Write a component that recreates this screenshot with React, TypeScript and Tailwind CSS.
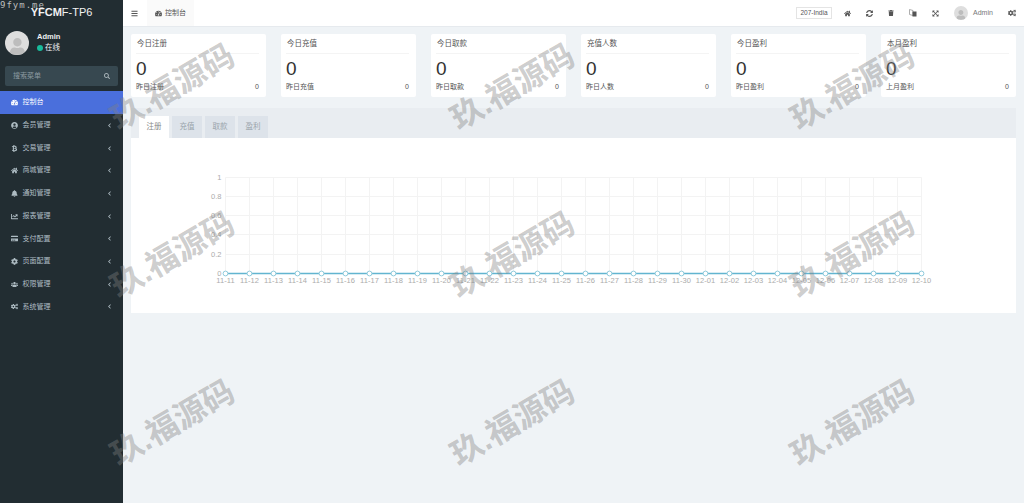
import React from "react";
import {
  FaTachometerAlt, FaUserCircle, FaBtc, FaHome, FaBell, FaChartLine, FaCreditCard, FaCog, FaUsers, FaCogs,
  FaBars, FaSyncAlt, FaTrash, FaExpandArrowsAlt, FaSearch, FaChevronLeft, FaUser,
} from "react-icons/fa";

const cjk = { fontFamily: '"Liberation Sans","Noto Sans CJK SC",sans-serif' };

const menu: [React.ComponentType<{ className?: string }>, string][] = [
  [FaUserCircle, "会员管理"],
  [FaBtc, "交易管理"],
  [FaHome, "商城管理"],
  [FaBell, "通知管理"],
  [FaChartLine, "报表管理"],
  [FaCreditCard, "支付配置"],
  [FaCog, "页面配置"],
  [FaUsers, "权限管理"],
  [FaCogs, "系统管理"],
];

const cards = [
  ["今日注册", "昨日注册"],
  ["今日充值", "昨日充值"],
  ["今日取款", "昨日取款"],
  ["充值人数", "昨日人数"],
  ["今日盈利", "昨日盈利"],
  ["本月盈利", "上月盈利"],
];

const dates = [
  ...Array.from({ length: 20 }, (_, i) => `11-${11 + i}`),
  ...Array.from({ length: 10 }, (_, i) => `12-${String(i + 1).padStart(2, "0")}`),
];

function Avatar({ size }: { size: string }) {
  return (
    <div className={`${size} rounded-full bg-[#dedede] overflow-hidden flex items-end justify-center shrink-0`}>
      <FaUser className="w-[70%] h-[70%] text-[#bdbdbd]" />
    </div>
  );
}

function TranslateIcon() {
  return (
    <svg width="8" height="8" viewBox="0 0 8 8" className="shrink-0">
      <path d="M0.5 0.5 L4 1.5 V6.5 L0.5 5.5 Z" fill="none" stroke="#999" strokeWidth="0.8" />
      <rect x="3.5" y="2.5" width="4" height="5" fill="#555" />
    </svg>
  );
}

function Chart() {
  const x0 = 94.5;
  const ys = [0, 19, 38, 57, 77, 96];
  const labels = ["1", "0.8", "0.6", "0.4", "0.2", "0"];
  return (
    <svg width="885" height="175" className="block" style={{ fontFamily: '"Liberation Sans",sans-serif' }}>
      <g transform="translate(0,39.5)">
        {ys.map((y) => (
          <line key={y} x1={x0} x2={x0 + 696} y1={y} y2={y} stroke="#f3f3f3" strokeWidth="1" />
        ))}
        {dates.map((d, i) => (
          <line key={d} x1={x0 + i * 24} x2={x0 + i * 24} y1={0} y2={96} stroke="#f3f3f3" strokeWidth="1" />
        ))}
        {ys.map((y, i) => (
          <text key={y} x={x0 - 4} y={y + 2.5} textAnchor="end" fontSize="7.5" fill="#ababab">{labels[i]}</text>
        ))}
        <line x1={x0} x2={x0 + 696} y1={96} y2={96} stroke="#62b5d0" strokeWidth="1.5" />
        {dates.map((d, i) => (
          <circle key={d} cx={x0 + i * 24} cy={96} r="2.4" fill="#fff" stroke="#8fcbdc" strokeWidth="1" />
        ))}
        {dates.map((d, i) => (
          <text key={d} x={x0 + i * 24} y={105.5} textAnchor="middle" fontSize="7.5" letterSpacing="0.1" fill="#ababab">{d}</text>
        ))}
      </g>
    </svg>
  );
}

export default function App() {
  return (
    <div className="relative flex h-[503px] w-[1024px] overflow-hidden bg-[#eff3f6] text-[#444]" style={cjk}>
      <aside className="flex w-[123px] shrink-0 flex-col bg-[#222d32]">
        <div className="flex h-[25px] items-center justify-center text-[11px] text-[#f2f2f2]">
          <b>YFCM</b>F-TP6
        </div>
        <div className="flex h-[41px] items-start gap-2 px-[5px] pt-[6px]">
          <Avatar size="h-[24px] w-[24px]" />
          <div className="mt-[1px] flex flex-col gap-[1px]">
            <span className="text-[7.5px] leading-[10px] font-bold text-[#eef1f2]">Admin</span>
            <span className="flex items-center gap-[2px] text-[7.5px] leading-[10px] text-[#eef1f2]">
              <i className="h-[6px] w-[6px] rounded-full bg-[#18bc9c]" />在线
            </span>
          </div>
        </div>
        <div className="mx-[5px] flex h-[20px] items-center justify-between rounded-[2px] bg-[#374850] pr-[8px] pl-[8px] text-[7px] text-[#8c9aa1]">
          搜索菜单
          <FaSearch className="h-[6px] w-[6px] text-[#a8b3b8]" />
        </div>
        <nav className="mt-[5px] flex flex-col">
          <div className="flex h-[23px] items-center gap-[4.5px] bg-[#4a6fdc] pl-[11px] text-[7px] text-white">
            <FaTachometerAlt className="h-[7px] w-[7px]" />控制台
          </div>
          {menu.map(([Icon, label]) => (
            <div key={label} className="flex h-[22.7px] items-center justify-between pr-[11px] pl-[11px] text-[7px] text-[#aebcc3]">
              <span className="flex items-center gap-[4.5px]">
                <Icon className="h-[7px] w-[7px]" />{label}
              </span>
              <FaChevronLeft className="h-[5px] w-[5px]" />
            </div>
          ))}
        </nav>
      </aside>

      <main className="flex min-w-0 flex-1 flex-col">
        <header className="flex h-[27px] items-center border-b border-[#e6eaee] bg-white pr-[8px] text-[#555]">
          <FaBars className="ml-[8px] h-[7px] w-[7px]" />
          <div className="ml-[9px] flex h-full w-[47px] items-center justify-center gap-[3px] bg-[#fafafa] text-[7px]">
            <FaTachometerAlt className="h-[7px] w-[7px]" />控制台
          </div>
          <div className="ml-auto flex h-[12px] w-[36px] items-center justify-center border border-[#e4e4e4] text-[6.5px]">207-India</div>
          <div className="ml-[11.5px] flex w-[95px] items-center justify-between">
            <FaHome className="h-[7px] w-[7px]" />
            <FaSyncAlt className="h-[7px] w-[7px]" />
            <FaTrash className="h-[6px] w-[6px]" />
            <TranslateIcon />
            <FaExpandArrowsAlt className="h-[7px] w-[7px]" />
          </div>
          <div className="ml-[15.5px]"><Avatar size="h-[14px] w-[14px]" /></div>
          <span className="ml-[5px] w-[19px] text-[7px] text-[#777]">Admin</span>
          <FaCogs className="ml-[16px] h-[8px] w-[8px]" />
        </header>

        <div className="grid grid-cols-6 gap-[15px] px-[8px] pt-[7px]">
          {cards.map(([a, b]) => (
            <div key={a} className="h-[63px] rounded-[2px] bg-white pr-[7px] pl-[5px]">
              <div className="flex h-[20px] items-center border-b border-[#f4f4f4] pl-[1px] text-[7.5px] text-[#555]">{a}</div>
              <div className="flex h-[28px] items-center text-[19px] leading-none text-[#333]">0</div>
              <div className="flex items-center justify-between text-[7px] leading-[10px] text-[#555]">
                <span>{b}</span><span>0</span>
              </div>
            </div>
          ))}
        </div>

        <section className="mx-[8px] mt-[11px] h-[205px] bg-white">
          <div className="flex h-[30px] items-end gap-[3px] bg-[#e9edf1] pl-[8px]">
            <div className="flex h-[22px] w-[30px] items-center justify-center bg-white text-[7.5px] text-[#888]">注册</div>
            {["充值", "取款", "盈利"].map((t) => (
              <div key={t} className="flex h-[22px] w-[30px] items-center justify-center bg-[#dde3ea] text-[7.5px] text-[#9aa3ab]">{t}</div>
            ))}
          </div>
          <Chart />
        </section>
      </main>

      <div className="pointer-events-none absolute inset-0 grid grid-cols-[repeat(3,340px)] grid-rows-[repeat(3,168px)] pt-[3px] pl-[2px]">
        {Array.from({ length: 9 }, (_, i) => (
          <div key={i} className="flex items-center justify-center">
            <span className="-rotate-30 text-[32px] leading-none font-bold whitespace-nowrap text-[#80808066]">玖.福源码</span>
          </div>
        ))}
      </div>
      <div className="absolute top-[-1px] left-0 text-[9px] tracking-[1px] text-[#bdbdbd]" style={{ fontFamily: '"DejaVu Sans Mono",monospace' }}>9fym.me</div>
    </div>
  );
}
